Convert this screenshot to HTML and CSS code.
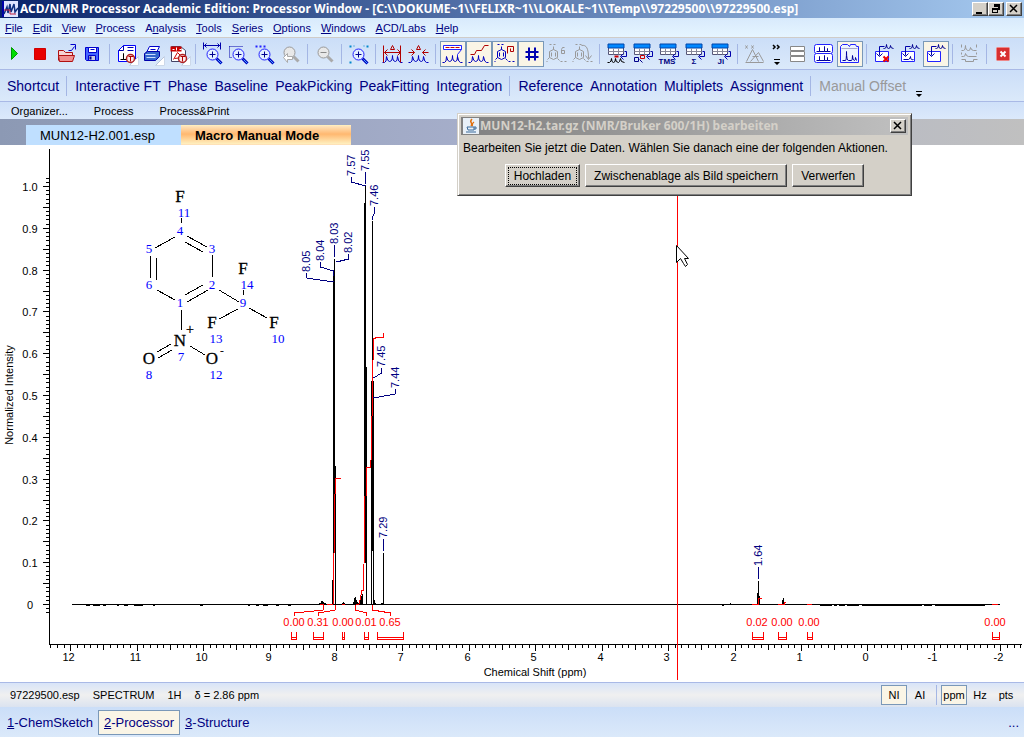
FILE: index.html
```html
<!DOCTYPE html>
<html lang="de">
<head>
    <meta charset="UTF-8">
    <meta name="viewport" content="width=device-width, initial-scale=1.0">
    <title>ACD/NMR Processor Academic Edition</title>
    <link rel="stylesheet" href="styles.css">
</head>
<body>
    <svg class="defs" aria-hidden="true">
        <symbol id="lens" viewBox="0 0 24 24">
            <path d="M16 17l5 5" stroke="#0000c0" stroke-width="3"/>
            <path d="M17 18l4 4" stroke="#4af"/>
            <circle cx="12" cy="13" r="5.500" fill="#e4f0ff" stroke="#22f"/>
            <path d="M9 13h6M12 10v6" stroke="#000090"/>
        </symbol>
        <symbol id="lens-off" viewBox="0 0 24 24">
            <path d="M15 15l5 5" stroke="#aaa" stroke-width="3"/>
            <circle cx="11" cy="11" r="5.500" fill="#e8e8e8" stroke="#999"/>
        </symbol>
        <symbol id="stamp" viewBox="0 0 24 24">
            <circle cx="16" cy="17" r="4" fill="#fde8e8" stroke="#b02020" stroke-width="1.500"/>
            <path d="M14 15h5M16 15v5" stroke="#b00000"/>
        </symbol>
        <symbol id="corner" viewBox="0 0 24 24">
            <path d="M24 15v9h-9z" fill="#fff" stroke="#b8c4d8"/>
        </symbol>
        <symbol id="wave" viewBox="0 0 24 24">
            <path d="M2 21h2q2 0 2-6q1 5 3 5q3 0 3-6q0 6 3 6q2 0 2-5q1 6 3 6h2" fill="none" stroke="currentColor"/>
        </symbol>
        <symbol id="grid" viewBox="0 0 24 24">
            <path d="M4 4h15v9h-15z" fill="#fff" stroke="#557"/>
            <path d="M3.500 2.500h16v4h-16z" fill="#08f" stroke="#04a"/>
            <path d="M4 10h15M9 7v6M14 7v6" stroke="#889"/>
            <path d="M20 10h2v5h-5M19 12l-3 3l3 3" fill="none" stroke="#00a"/>
        </symbol>
        <symbol id="ring" viewBox="0 0 24 24">
            <path d="M5 10l4-2l4 2v6l-4 2l-4-2zM7 11v4M11 11v4M5 16l-2 2M13 17l2 2" fill="none" stroke="currentColor"/>
            <path d="M5 3h2M9 3h2M9 5v3M16 20h2M20 20h2M2 20h1" stroke="currentColor"/>
        </symbol>
        <symbol id="page-in" viewBox="0 0 24 24">
            <path d="M4 10h13v10h-13z" fill="#fff" stroke="#22f"/>
            <path d="M8 14V5h5M5 12l3 3l3-3" fill="none" stroke="#00a"/>
            <path d="M12 7h1q2 0 2-4q0 4 2 4q2 0 2-3q0 3 3 3" fill="none" stroke="#000090"/>
        </symbol>
    </svg>

    <header class="titlebar">
        <svg class="app-icon" viewBox="0 0 16 16">
            <path d="M0 0h16v16H0z" fill="#dfe4ff"/>
            <path d="M0 0h2v16H0z" fill="#00a"/>
            <path d="M2 13l3-7l1 6l2-9l1 8l3-8l1 8l3-4" fill="none" stroke="#103080" stroke-width="1.500"/>
            <path d="M2 9h6v4h6" fill="none" stroke="#c02040"/>
        </svg>
        <h1>ACD/NMR Processor Academic Edition: Processor Window - [C:\\DOKUME~1\\FELIXR~1\\LOKALE~1\\Temp\\97229500\\97229500.esp]</h1>
        <div class="window-buttons">
            <button type="button" aria-label="Minimize"><svg viewBox="0 0 14 12"><path d="M3 9h6v2H3z"/></svg></button>
            <button type="button" aria-label="Restore"><svg viewBox="0 0 14 12"><path d="M5 1h6v6H9V4H5zM3 5h6v5H3zM4 7v2h4V7z" fill-rule="evenodd"/></svg></button>
            <button type="button" class="close" aria-label="Close"><svg viewBox="0 0 14 12"><path d="M3 2l7 7M10 2L3 9" stroke="#000" stroke-width="1.500"/></svg></button>
        </div>
    </header>

    <nav class="menu">
        <a href="#"><u>F</u>ile</a>
        <a href="#"><u>E</u>dit</a>
        <a href="#"><u>V</u>iew</a>
        <a href="#"><u>P</u>rocess</a>
        <a href="#">A<u>n</u>alysis</a>
        <a href="#"><u>T</u>ools</a>
        <a href="#"><u>S</u>eries</a>
        <a href="#"><u>O</u>ptions</a>
        <a href="#"><u>W</u>indows</a>
        <a href="#"><u>A</u>CD/Labs</a>
        <a href="#"><u>H</u>elp</a>
    </nav>

    <div class="toolbar">
        <button type="button" aria-label="Run"><svg viewBox="0.5 0.5 24 24"><path d="M9 6l6 6l-6 6z" fill="#0d0" stroke="#090"/></svg></button>
        <button type="button" aria-label="Stop"><svg viewBox="0.5 0.5 24 24"><path d="M6 7h11v11H6z" fill="#e80000" stroke="#d00000"/></svg></button>
        <button type="button" aria-label="Open"><svg viewBox="0.5 0.5 24 24"><path d="M4 19V9h5l2 2h7v3" fill="#f6d4d4" stroke="#b01010"/><path d="M4 14h16l-2 6H5z" fill="#f09090" stroke="#b01010"/><path d="M14 9h3l3-4M16 3h5v5" fill="none" stroke="#00c"/></svg></button>
        <button type="button" aria-label="Save"><svg viewBox="0.5 0.5 24 24"><path d="M5 6h13v13H6l-1-1z" fill="#46f" stroke="#00c"/><path d="M8 6h8v5H8z" fill="#fff" stroke="#00c"/><path d="M10 8h4" stroke="#00c"/><path d="M8 14h7v5H8z" fill="#ccd" stroke="#00c"/><path d="M10 15v3" stroke="#008" stroke-width="2"/></svg></button>
        <span class="sep"></span>
        <button type="button" aria-label="Report"><svg viewBox="0.5 0.5 24 24"><path d="M9 4h12v16H4V9z" fill="#fff" stroke="#00f"/><path d="M13 6h6M13 9h6M4 9h5V4" fill="none" stroke="#00a"/><path d="M6 18h3v-6v6h4" fill="none" stroke="#000"/><use href="#corner"/><use href="#stamp"/></svg></button>
        <button type="button" aria-label="Print"><svg viewBox="0.5 0.5 24 24"><path d="M9 5h10l-3 6H6z" fill="#fff" stroke="#00c"/><path d="M10 8h5" stroke="#00c"/><path d="M4 12l3-2h12v5l-4 4H4z" fill="#36c" stroke="#00a"/><path d="M5 13h10M6 16h9" stroke="#cdf"/><use href="#corner"/></svg></button>
        <button type="button" aria-label="PDF"><svg viewBox="0.5 0.5 24 24"><path d="M5 5h9l5 4v11H5z" fill="#fff" stroke="#446"/><path d="M4 5h11v5H4z" fill="#c00"/><path d="M6 8h2M10 6v3M13 8h2" stroke="#fff"/><path d="M7 18l4-7l5 5l-8 1" fill="none" stroke="#c00"/><use href="#corner"/><use href="#stamp"/></svg></button>
        <span class="sep"></span>
        <button type="button" aria-label="Zoom X"><svg viewBox="0.5 0.5 24 24"><use href="#lens"/><path d="M3 1v7M20 1v7M3 4h17M6 2L4 4l2 2M17 2l2 2l-2 2" fill="none" stroke="#00a"/></svg></button>
        <button type="button" aria-label="Zoom area"><svg viewBox="0.5 0.5 24 24"><path d="M3 5h13M3 5v11h3" fill="none" stroke="#00a" stroke-dasharray="1 1"/><use href="#lens"/></svg></button>
        <button type="button" aria-label="Zoom"><svg viewBox="0.5 0.5 24 24"><path d="M3 5h10" stroke="#22f" stroke-width="2" stroke-dasharray="2 2"/><use href="#lens"/></svg></button>
        <button type="button" aria-label="Previous zoom" disabled><svg viewBox="0.5 0.5 24 24"><use href="#lens-off"/><path d="M5 16l4-4v3h5v3H9v3z" fill="#fff" stroke="#aaa"/></svg></button>
        <span class="sep"></span>
        <button type="button" aria-label="Zoom out" disabled><svg viewBox="0.5 0.5 24 24"><use href="#lens-off"/><path d="M8 11h6" stroke="#888"/></svg></button>
        <span class="sep"></span>
        <button type="button" aria-label="Full zoom"><svg viewBox="0.5 0.5 24 24"><use href="#lens"/><path d="M3 4h2v2H3zM20 4h2v2h-2zM3 20h2v2H3zM7 4h1v1H7zM17 4h1v1h-1z" fill="#08c"/></svg></button>
        <span class="sep"></span>
        <button type="button" aria-label="Range"><svg viewBox="0.5 0.5 24 24"><use href="#wave"/><path d="M3 4v17M20 4v17M4 11h16M7 8l-3 3l3 3M17 8l3 3l-3 3M10 8l2-4l2 4z" fill="none" stroke="#b00000"/></svg></button>
        <button type="button" aria-label="Distance"><svg viewBox="0.5 0.5 24 24"><use href="#wave"/><path d="M2 11h6M22 11h-6M5 8l3 3l-3 3M19 8l-3 3l3 3M10 8l2-4l2 4z" fill="none" stroke="#b00000"/></svg></button>
        <span class="sep"></span>
        <button type="button" class="on" aria-label="Peak labels"><svg viewBox="0.5 0.5 24 24"><path d="M3 4h18v4H3z" fill="#fff" stroke="#22f"/><path d="M5 6h14" stroke="#c00" stroke-dasharray="4 1"/><path d="M21 8l-4 5v5" fill="none" stroke="#22f"/><use href="#wave"/></svg></button>
        <button type="button" class="on" aria-label="Integral curve"><svg viewBox="0.5 0.5 24 24"><path d="M4 13h4l2-4h5l3-5h4" fill="none" stroke="#b00000"/><use href="#wave"/></svg></button>
        <button type="button" class="on" aria-label="Structure"><svg viewBox="0.5 0.5 24 24"><use href="#ring"/><path d="M15 12V5h6v5h-3V7" fill="none" stroke="#b00000"/></svg></button>
        <button type="button" class="on" aria-label="Numbering"><svg viewBox="0.5 0.5 24 24"><path d="M10.500 6v13M16.500 6v13M7 10.500h13M7 15.500h13" stroke="#0000b0" stroke-width="2"/></svg></button>
        <button type="button" aria-label="Atom numbers" disabled><svg viewBox="0.5 0.5 24 24"><use href="#ring"/><path d="M20 6h-2l-1 2v4h3V9h-3" fill="none" stroke="currentColor"/></svg></button>
        <button type="button" aria-label="Rotate" disabled><svg viewBox="0.5 0.5 24 24"><use href="#ring"/><path d="M11 4c5-1 7 3 7 13M15 14l3 4l3-4" fill="none" stroke="currentColor"/></svg></button>
        <span class="sep"></span>
        <button type="button" aria-label="Peak table"><svg viewBox="0.5 0.5 24 24"><use href="#grid"/><path d="M3 21h2q2-1 2-4q0 4 2 4q2 0 2-4q0 4 3 4q1 0 2-4q0 4 4 4" fill="none" stroke="#000"/><path d="M10 15h4" stroke="#c00" stroke-width="2"/></svg></button>
        <button type="button" aria-label="Assignment table"><svg viewBox="0.5 0.5 24 24"><use href="#grid"/><path d="M4 16h4v4H4zM9 18l3 3" fill="none" stroke="#008"/><path d="M10 14h4v3h-4z" fill="none" stroke="#c00"/></svg></button>
        <button type="button" aria-label="Reference table"><svg viewBox="0.5 0.5 24 24"><use href="#grid"/><text x="2" y="22" class="glyph">TMS</text></svg></button>
        <button type="button" aria-label="Integral table"><svg viewBox="0.5 0.5 24 24"><use href="#grid"/><text x="9" y="22" class="glyph">Σ</text></svg></button>
        <button type="button" aria-label="Coupling table"><svg viewBox="0.5 0.5 24 24"><use href="#grid"/><text x="9" y="22" class="glyph">Ji</text></svg></button>
        <span class="sep"></span>
        <button type="button" aria-label="Series" disabled><svg viewBox="0.5 0.5 24 24"><path d="M3 21h18M4 20l6-12l6 12M8 20l8-9l5 9M10 15h6M3 4l2 3M5 4L3 7M9 4l2 3M11 4L9 7" fill="none" stroke="currentColor"/></svg></button>
        <button type="button" class="more" aria-label="More buttons"><svg viewBox="0 0 16 24"><path d="M4 3l2 2l-2 2M8 3l2 2l-2 2" fill="none" stroke="#000" stroke-width="1.500"/><path d="M5 17h6v1H5zM5 20h6l-3 3z"/></svg></button>
        <button type="button" aria-label="Tile"><svg viewBox="0.5 0.5 24 24"><path d="M5 5h14v4H5zM5 10h14v4H5zM5 15h14v5H5z" fill="#fff" stroke="#888"/></svg></button>
        <button type="button" aria-label="Stack"><svg viewBox="0.5 0.5 24 24"><rect x="3" y="3" width="18" height="9" rx="2" fill="#fff" stroke="#22f"/><rect x="3" y="12" width="18" height="9" rx="2" fill="#fff" stroke="#22f"/><path d="M5 10h3V6v4h5V5v5h3V7v3h3M5 19h3v-4v4h5v-5v5h3v-3v3h3" fill="none" stroke="#009"/></svg></button>
        <button type="button" class="on" aria-label="Tabs"><svg viewBox="0.5 0.5 24 24"><path d="M3 21V5l2-2h5l2 2l1-2h5l1 2h2v16z" fill="#eef4ff" stroke="#22f"/><path d="M4 7h16" stroke="#aac"/><path d="M5 19h3q1 0 1-9q0 9 2 9h3q1 0 1-5q0 5 2 5q1 0 1-3l1 3" fill="none" stroke="#009"/></svg></button>
        <span class="sep"></span>
        <button type="button" aria-label="Discard page"><svg viewBox="0.5 0.5 24 24"><use href="#page-in"/><path d="M12 15l5 5M17 15l-5 5" stroke="#e00" stroke-width="2"/></svg></button>
        <button type="button" aria-label="Copy page"><svg viewBox="0.5 0.5 24 24"><use href="#page-in"/><path d="M6 18h5q2-1 2-3q0 4 3 3" fill="none" stroke="#009"/></svg></button>
        <button type="button" class="on" aria-label="Insert page"><svg viewBox="0.5 0.5 24 24"><use href="#page-in"/></svg></button>
        <span class="sep"></span>
        <button type="button" aria-label="Compare" disabled><svg viewBox="0.5 0.5 24 24"><path d="M4 9h2q2 0 2-5q0 5 3 5q2 0 2-3q1 3 3 3h3M4 15h2q2 0 2-3q1 3 3 3h8M4 18h4v2h8v-2h4M4 3v3M19 3v3M4 11v2M19 11v2" fill="none" stroke="currentColor"/></svg></button>
        <span class="sep"></span>
        <button type="button" aria-label="Close document"><svg viewBox="0.5 0.5 24 24"><rect x="5" y="6" width="13" height="13" rx="1" fill="#d83030" stroke="#e88"/><path d="M9 10l5 5M14 10l-5 5" stroke="#fff" stroke-width="2"/></svg></button>
    </div>

    <div class="modes">
        <button type="button">Shortcut</button>
        <span class="sep"></span>
        <button type="button">Interactive FT</button>
        <button type="button">Phase</button>
        <button type="button">Baseline</button>
        <button type="button">PeakPicking</button>
        <button type="button">PeakFitting</button>
        <button type="button">Integration</button>
        <span class="sep"></span>
        <button type="button">Reference</button>
        <button type="button">Annotation</button>
        <button type="button">Multiplets</button>
        <button type="button">Assignment</button>
        <span class="sep"></span>
        <button type="button" disabled>Manual Offset</button>
        <button type="button" class="more" aria-label="More modes"><svg viewBox="0 0 16 24"><path d="M5 17h6v1H5zM5 20h6l-3 3z"/></svg></button>
    </div>

    <div class="macros">
        <button type="button">Organizer...</button>
        <button type="button">Process</button>
        <button type="button">Process&amp;Print</button>
    </div>

    <div class="tabs">
        <button type="button" class="tab">MUN12-H2.001.esp</button>
        <button type="button" class="tab active">Macro Manual Mode</button>
    </div>

    <main class="plot-area">
        <svg class="plot" id="plot" viewBox="0 145 1024 537" role="img" aria-label="1H spectrum">
            <g class="axes" id="axes">
                <path d="M49.500 149v496M49 644.500h973"/>
            </g>
            <g class="axis-text" id="axisText">
                <text x="535" y="676">Chemical Shift (ppm)</text>
                <text transform="translate(13 395) rotate(-90)">Normalized Intensity</text>
            </g>

            <g class="bonds">
                <path d="M181.500 218v5M181.500 310v20M243.500 290v5"/>
                <path d="M175 237l-20 11M150.500 256v22M156.500 258v22M157 290l18 10M187 236l20 11M185 242l18 10M212.500 255v22M208 290l-21 12M203 285l-18 10M219 290l20 12"/>
                <path d="M238 309l-19 10M249 308l18 10M171 344l-14 8M172 350l-14 8M190 346l15 9"/>
            </g>
            <g class="atoms">
                <text x="180" y="202">F</text>
                <text x="243" y="274">F</text>
                <text x="212" y="328">F</text>
                <text x="274" y="328">F</text>
                <text x="180" y="346">N</text>
                <text x="149" y="364">O</text>
                <text x="212" y="364">O</text>
                <text x="190" y="334" class="charge">+</text>
                <text x="222" y="354" class="charge minus">-</text>
            </g>
            <g class="atom-numbers">
                <text x="184" y="217">11</text>
                <text x="180" y="235">4</text>
                <text x="212" y="253">3</text>
                <text x="149" y="253">5</text>
                <text x="149" y="289">6</text>
                <text x="212" y="289">2</text>
                <text x="180" y="307">1</text>
                <text x="247" y="289">14</text>
                <text x="243" y="307">9</text>
                <text x="216" y="343">13</text>
                <text x="278" y="343">10</text>
                <text x="181" y="361">7</text>
                <text x="149" y="379">8</text>
                <text x="216" y="379">12</text>
            </g>

            <g class="signal">
                <path d="M72 604.500h928M319 603.500h7M353 603.500h9"/>
                <path d="M86 605.500h4M93 605.500h7M103 605.500h3M117 605.500h2M124 605.500h4M134 605.500h9M153 605.500h2M200 605.500h3M248 605.500h2M256 605.500h3M263 605.500h5M276 605.500h3M288 605.500h3M722 605.500h2M820 605.500h12M834 605.500h3M839 605.500h6M847 605.500h12M862 605.500h60M924 605.500h8M935 605.500h50" />
                <path d="M332.500 580v24M334.500 259v18M335.500 466v138M366.500 367v237M365.500 186v18M372.500 221v160M371.500 381v223M373.500 381v223M383.500 553v51"/>
                <path d="M333 276h2v277h-2zM364 203h2v360h-2zM371 381h3v170h-3z" class="solid"/>
                <path d="M320 604l2-4l2 3l2 1zM342 604l1-2l2 2zM353 604l2-8l2 5l2 3zM360 604l1-12l1 7l1-9v14zM374 604v-5l2 5zM381 604l1-2l1 2z" class="solid"/>
                <path d="M757.500 593v11M758.500 581v23M759.500 596v8M782.500 600v4M783.500 598v6M730.500 603v1"/>
            </g>
            <g class="integral">
                <path d="M320 604.500h4M327 604.500h6M333.500 604v-51M334.500 553v-59M335.500 494v-16h5"/>
                <path d="M342 604.500h3M356 604.500h3l3-14h1.500v-27M364.500 563v-67M366.500 496v-29h4v-7M371.500 460v-44M372.500 416v-56M373.500 360v-21l4-2h6v-4"/>
                <path d="M752 604.500h6v-6h4M778 604.500h6v-2h2M807 604.500h5M992 604.500h6"/>
            </g>
            <g class="integral" id="integrals"></g>
            <g class="peak-labels" id="peakLabels"></g>

            <path class="cursor-line" d="M677.500 145v535"/>
            <path class="pointer" d="M676.500 245.500v17l4-4l3 5l2 3l2-2l-3-6h4z"/>
        </svg>

        <section class="dialog" role="dialog" aria-labelledby="dialogTitle">
            <div class="dialog-title">
                <svg viewBox="0 0 16 16">
                    <path d="M0 0h16v16H0z" fill="#e8f0f8"/>
                    <path d="M9 1c-4 4 2 3-1 7M11 4c-3 2-1 3-2 4" fill="none" stroke="#e07010" stroke-width="1.500"/>
                    <path d="M4 9h7v3H5zM11 9h2v2h-2M3 14h10" fill="none" stroke="#3a6a9a"/>
                </svg>
                <h2 id="dialogTitle">MUN12-h2.tar.gz (NMR/Bruker 600/1H) bearbeiten</h2>
                <button type="button" class="raised" aria-label="Schließen"><svg viewBox="0 0 14 12"><path d="M3 2l7 7M10 2l-7 7" stroke="#000" stroke-width="1.500"/></svg></button>
            </div>
            <p>Bearbeiten Sie jetzt die Daten. Wählen Sie danach eine der folgenden Aktionen.</p>
            <div class="dialog-actions">
                <button type="button" class="raised default"><span>Hochladen</span></button>
                <button type="button" class="raised">Zwischenablage als Bild speichern</button>
                <button type="button" class="raised">Verwerfen</button>
            </div>
        </section>
    </main>

    <footer>
        <div class="status">
            <span>97229500.esp</span>
            <span>SPECTRUM</span>
            <span>1H</span>
            <span>δ = 2.86 ppm</span>
            <div class="units">
                <button type="button" class="on">NI</button>
                <button type="button">AI</button>
                <span class="sep"></span>
                <button type="button" class="on">ppm</button>
                <button type="button">Hz</button>
                <button type="button">pts</button>
            </div>
        </div>
        <nav class="windows">
            <a href="#"><u>1</u>-ChemSketch</a>
            <a href="#" class="on"><u>2</u>-Processor</a>
            <a href="#"><u>3</u>-Structure</a>
            <a href="#" class="rest">...</a>
        </nav>
    </footer>
    <script src="plot.js"></script>
</body>
</html>
```

FILE: styles.css
```css
* {
    box-sizing: border-box;
}
body {
    margin: 0;
    min-height: 100vh;
    display: flex;
    flex-direction: column;
    font-family: "Liberation Sans", Arial, sans-serif;
    font-size: 11px;
    color: #000;
    background-color: #fff;
}
button {
    margin: 0;
    padding: 0;
    border: 1px solid transparent;
    background: none;
    font: inherit;
    color: inherit;
}
a {
    color: inherit;
    text-decoration: none;
}
svg {
    display: block;
    fill: #000;
}
.defs {
    position: absolute;
    width: 0;
    height: 0;
}

/* title bar */
.titlebar {
    display: flex;
    align-items: center;
    height: 18px;
    padding: 0 2px;
    background: linear-gradient(to right, #0a246a, #a6caf0);
}
.app-icon {
    width: 16px;
    height: 16px;
    margin-right: 2px;
}
.titlebar h1 {
    flex: 1;
    margin: 0;
    font: bold 12px "Noto Sans", Tahoma, sans-serif;
    line-height: 18px;
    color: #fff;
    white-space: nowrap;
}
.window-buttons {
    display: flex;
}
.window-buttons button,
.raised {
    background-color: #d4d0c8;
    border: 1px solid;
    border-color: #fff #404040 #404040 #fff;
    box-shadow: inset -1px -1px 0 #808080;
}
.window-buttons button {
    width: 16px;
    height: 14px;
}
.window-buttons .close {
    margin-left: 2px;
}

/* menu */
.menu {
    display: flex;
    align-items: center;
    gap: 10px;
    height: 20px;
    padding: 0 5px;
    color: #000080;
    background: linear-gradient(#d8eafc, #e6f5ff);
    border-bottom: 1px solid #d0ccc8;
}

/* icon bar */
.toolbar,
.modes {
    display: flex;
    align-items: center;
    color: #0000c0;
    background: linear-gradient(#cbdef8, #dbe9fa);
    border-bottom: 1px solid #a9b9e6;
}
.toolbar {
    height: 32px;
    padding: 0 4px 0 2px;
}
.toolbar button {
    width: 26px;
    height: 26px;
}
.toolbar svg {
    width: 24px;
    height: 24px;
}
.toolbar .more {
    width: 17px;
}
.toolbar .more svg,
.modes .more svg {
    width: 16px;
}
button:disabled {
    color: #999;
}
.on {
    background-color: #faf5e6;
    border: 1px solid #7a98b8;
}
.sep {
    width: 1px;
    height: 20px;
    margin: 0 4px 0 3px;
    background-color: #a4b6e4;
}
.glyph {
    font: bold 8px "Liberation Sans", sans-serif;
    fill: #000080;
}

/* mode bar */
.modes {
    gap: 1px;
    height: 32px;
    padding: 0 4px;
    font-size: 14px;
    color: #000080;
}
.modes button {
    padding: 0 2px;
    white-space: nowrap;
}
.modes .more {
    padding: 0;
}

.macros {
    display: flex;
    align-items: center;
    gap: 24px;
    height: 17px;
    padding: 0 10px;
    background: linear-gradient(#cfe0f9, #dbe9fb);
}

/* document tabs */
.tabs {
    display: flex;
    align-items: flex-end;
    height: 26px;
    padding-left: 26px;
    background: linear-gradient(to right, #8c99b4, #a8b0cc 50%, #c0c0c0);
}
.tab {
    height: 20px;
    width: 155px;
    padding: 0 13px;
    font-size: 13px;
    text-align: left;
    background-color: #bfdfff;
}
.tab.active {
    width: 170px;
    font-weight: bold;
    background: linear-gradient(#ffe4bc, #ffb870 45%, #fff0c0);
}

/* spectrum */
.plot-area {
    position: relative;
    flex: 1;
}
.plot {
    width: 100%;
    height: auto;
}
.plot text {
    font-size: 11px;
    text-anchor: middle;
}
.axes path,
.bonds path,
.signal path {
    fill: none;
    stroke: #000;
    shape-rendering: crispEdges;
}
.signal .solid {
    fill: #000;
    stroke: none;
}
.integral path {
    fill: none;
    stroke: #ff0000;
    shape-rendering: crispEdges;
}
.integral text {
    fill: #ff0000;
}
.peak-labels path {
    fill: none;
    stroke: #000080;
    shape-rendering: crispEdges;
}
.plot .peak-labels text {
    fill: #000080;
    text-anchor: start;
}
.plot .atoms text {
    font: 17px "Liberation Serif", serif;
    stroke: #000;
    stroke-width: 0.3px;
}
.plot .atoms .charge {
    font-size: 14px;
}
.plot .atoms .minus {
    font-size: 10px;
}
.plot .atom-numbers text {
    font: 13px "Liberation Serif", serif;
    fill: #0000ff;
}
.cursor-line {
    stroke: #ff0000;
    shape-rendering: crispEdges;
}
.pointer {
    fill: #fff;
    stroke: #000;
}

/* dialog */
.dialog {
    position: absolute;
    left: 457px;
    top: -32px;
    height: 83px;
    padding: 3px;
    background-color: #d4d0c8;
    border: 1px solid;
    border-color: #d4d0c8 #404040 #404040 #d4d0c8;
    box-shadow: inset 1px 1px 0 #fff, inset -1px -1px 0 #808080;
    width: 455px;
}
.dialog-title {
    display: flex;
    align-items: center;
    height: 18px;
    padding: 0 2px;
    background: linear-gradient(to right, #808080, #c0c0c0);
}
.dialog-title svg {
    width: 16px;
    height: 16px;
}
.dialog-title h2 {
    flex: 1;
    margin: 0 0 0 1px;
    font: bold 12px "Noto Sans", Tahoma, sans-serif;
    line-height: 18px;
    color: #d4d0c8;
    white-space: nowrap;
}
.dialog-title .raised {
    width: 16px;
    height: 14px;
}
.dialog-title .raised svg,
.window-buttons svg {
    width: 14px;
    height: 12px;
}
.dialog p {
    margin: 5px 2px 8px;
    font-size: 12px;
    line-height: 16px;
    white-space: nowrap;
}
.dialog-actions {
    display: flex;
    justify-content: center;
    gap: 5px;
}
.dialog-actions .raised {
    height: 23px;
    padding: 0 8px;
    font-size: 12px;
}
.dialog-actions .default {
    padding: 0 2px;
}
.default span {
    display: block;
    padding: 1px 5px;
    border: 1px dotted #000;
}

/* bottom bars */
.status {
    display: flex;
    align-items: center;
    gap: 13px;
    height: 25px;
    padding: 0 5px 0 10px;
    background: linear-gradient(#d8e4f8, #f0f0f0 50%, #dbe3f0);
    border-top: 1px solid #a9b9e6;
}
.units {
    display: flex;
    align-items: center;
    margin-left: auto;
}
.units button {
    width: 26px;
    height: 20px;
}
.windows {
    display: flex;
    align-items: center;
    gap: 5px;
    height: 30px;
    padding: 0 5px 0 7px;
    font-size: 13px;
    color: #000080;
    background: linear-gradient(#cbdef8, #dbe9fa);
}
.windows .on {
    padding: 4px 5px;
}
.windows .rest {
    margin-left: auto;
}
```

FILE: plot.js
```javascript
const NS = 'http://www.w3.org/2000/svg';
const xOf = ppm => Math.round(867.4 - ppm * 66.43) + 0.5;
const yOf = value => Math.round(604 - value * 418) + 0.5;

function addPath(group, d) {
    const path = document.createElementNS(NS, 'path');
    path.setAttribute('d', d);
    group.appendChild(path);
}

function addText(group, content, x, y, vertical) {
    const text = document.createElementNS(NS, 'text');
    const rotate = vertical ? ' rotate(-90)' : '';
    text.setAttribute('transform', `translate(${x} ${y})${rotate}`);
    text.textContent = content;
    group.appendChild(text);
}

const axes = document.getElementById('axes');
const axisText = document.getElementById('axisText');

// x axis, one tick for every 0.1 ppm
for (let i = -23; i <= 123; i++) {
    const x = xOf(i / 10);
    const length = i % 10 === 0 ? 6 : i % 5 === 0 ? 5 : 3;
    addPath(axes, `M${x} 645v${length}`);
    if (i % 10 === 0) {
        addText(axisText, String(i / 10), x - 2, 661);
    }
}

// y axis, one tick for every 0.01
for (let i = -2; i <= 102; i++) {
    const y = yOf(i / 100);
    const length = i % 5 === 0 ? 6 : 3;
    addPath(axes, `M${49 - length} ${y}h${length}`);
    if (i % 10 === 0) {
        addText(axisText, i === 0 ? '0' : (i / 100).toFixed(1), 30, y + 4);
    }
}

// label, text x, text y, leader line
const peaks = [
    ['8.05', 310, 272, 'M306.5 273v5l27 4'],
    ['8.04', 324, 261, 'M320.5 262v5l13 4v5'],
    ['8.03', 338, 244, 'M334.5 245v12'],
    ['8.02', 352, 253, 'M348.5 254v5l-12 3'],
    ['7.57', 355, 176, 'M351.5 177v5l14 4'],
    ['7.55', 369, 171, 'M365.5 172v12'],
    ['7.46', 378, 206, 'M374.5 207v6l-2 4v3'],
    ['7.45', 385, 367, 'M381.5 368v5l-8 5'],
    ['7.44', 399, 388, 'M395.5 389v5l-22 4'],
    ['7.29', 387, 538, 'M383.5 539v12'],
    ['1.64', 762, 566, 'M758.5 567v12']
];
const peakLabels = document.getElementById('peakLabels');
peaks.forEach(([label, x, y, leader]) => {
    addText(peakLabels, label, x, y, true);
    addPath(peakLabels, leader);
});

// label, text x, bracket left and right, peak x of the leader
const integrals = [
    ['0.00', 294, 291, 296, 323],
    ['0.31', 318, 313, 323, 335],
    ['0.00', 343, 342, 344],
    ['0.01', 366, 364, 368, 355],
    ['0.65', 390, 377, 403, 372],
    ['0.02', 757, 752, 763],
    ['0.00', 782, 778, 786],
    ['0.00', 809, 807, 812],
    ['0.00', 995, 992, 999]
];
const integralGroup = document.getElementById('integrals');
integrals.forEach(([label, x, left, right, peak]) => {
    addText(integralGroup, label, x, 626);
    addPath(integralGroup, `M${left + 0.5} 632v7.500H${right + 0.5}V632M${left} 637.500H${right}`);
    if (peak) {
        addPath(integralGroup, `M${peak + 0.5} 605v5L${x + 0.5} 613v3`);
    }
});
```
